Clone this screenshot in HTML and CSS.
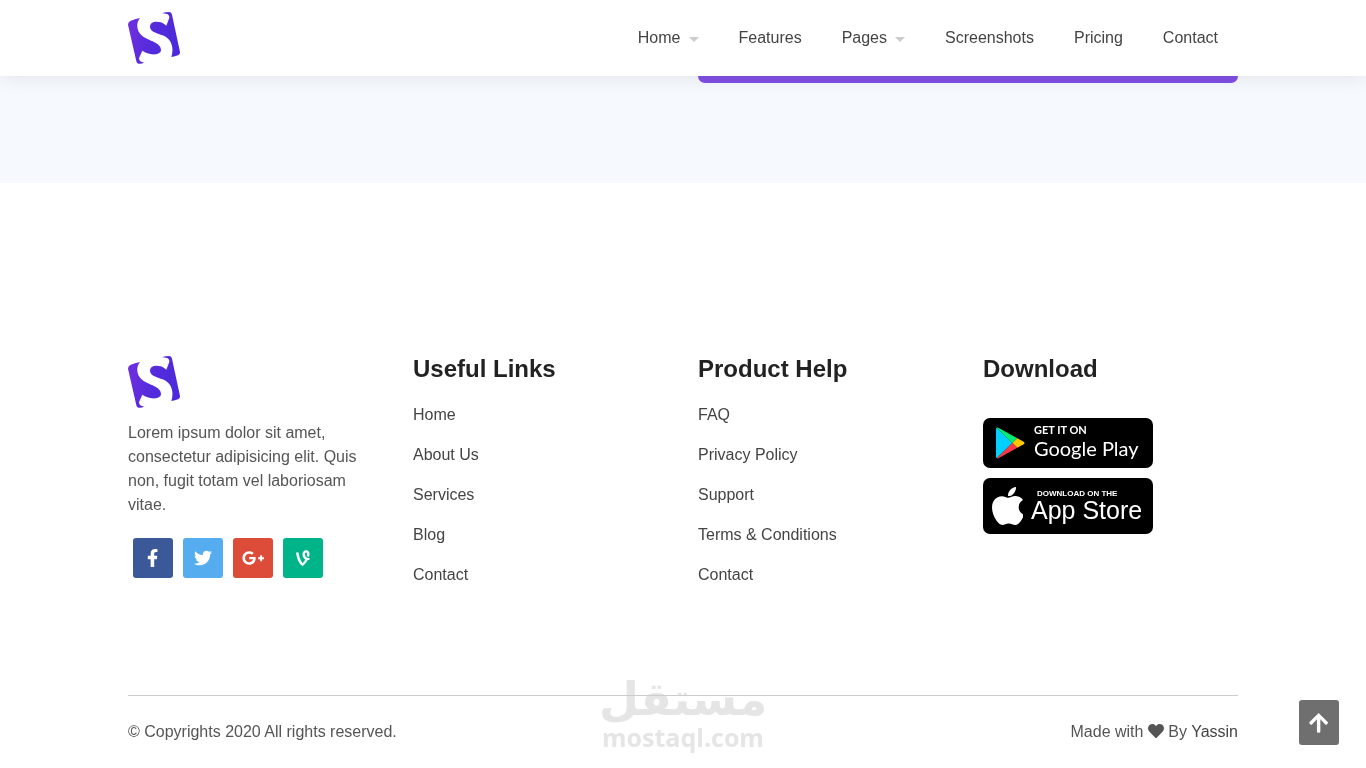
FILE: index.html
```html
<!DOCTYPE html>
<html lang="en">
<head>
<meta charset="utf-8">
<meta name="viewport" content="width=device-width, initial-scale=1">
<title>App landing page</title>
<link rel="stylesheet" href="styles.css">
</head>
<body>
<svg class="defs" aria-hidden="true">
  <defs>
    <linearGradient id="logo-fill" x1="0" y1="0" x2="1" y2="0.3">
      <stop offset="0" stop-color="#722fe0"/>
      <stop offset="0.6" stop-color="#542bdc"/>
      <stop offset="1" stop-color="#4c2adb"/>
    </linearGradient>
    <symbol id="logo" viewBox="0 0 156 156">
      <path fill="url(#logo-fill)" d="M0 38Q0 30 7 27Q20 21 36 18C24 32 24 58 43 72C63 88 98 90 99 114C99 128 75 130 58 124Q48 120 43 116L33 139C33 147 41 152 50 151Q40 157 31 155Q26 154 25 148Z M101 4Q112 0 124 0Q131 1 132 8L156 120Q157 127 150 130Q142 134 130 135C138 110 132 86 113 74C95 64 66 62 66 44C66 29 84 27 99 31Q108 35 115 41L124 17C125 7 114 4 101 4Z"/>
    </symbol>
  </defs>
</svg>

<header class="site-header">
  <div class="container header-row">
    <a class="brand" href="#" aria-label="Homepage"><svg class="logo"><use href="#logo"/></svg></a>
    <nav class="main-nav" aria-label="Main">
      <a class="has-menu" href="#">Home</a>
      <a href="#">Features</a>
      <a class="has-menu" href="#">Pages</a>
      <a href="#">Screenshots</a>
      <a href="#">Pricing</a>
      <a href="#">Contact</a>
    </nav>
  </div>
</header>

<main class="contact-section">
  <div class="container contact-grid">
    <div class="submit-edge"></div>
  </div>
</main>

<footer class="site-footer">
  <div class="container">
    <div class="footer-grid">
      <section class="about">
        <a class="brand" href="#" aria-label="Homepage"><svg class="logo"><use href="#logo"/></svg></a>
        <p class="about-text">Lorem ipsum dolor sit amet, consectetur adipisicing elit. Quis non, fugit totam vel laboriosam vitae.</p>
        <div class="social">
          <a class="facebook" href="#" aria-label="Facebook"><svg viewBox="0 0 320 512"><path d="M279.14 288l14.22-92.66h-88.91v-60.13c0-25.35 12.42-50.06 52.24-50.06h40.42V6.26S260.43 0 225.36 0c-73.22 0-121.08 44.38-121.08 124.72v70.62H22.89V288h81.39v224h100.17V288z"/></svg></a>
          <a class="twitter" href="#" aria-label="Twitter"><svg viewBox="0 0 512 512"><path d="M459.37 151.716c.325 4.548.325 9.097.325 13.645 0 138.72-105.583 298.558-298.558 298.558-59.452 0-114.68-17.219-161.137-47.106 8.447.974 16.568 1.299 25.34 1.299 49.055 0 94.213-16.568 130.274-44.832-46.132-.975-84.792-31.188-98.112-72.772 6.498.974 12.995 1.624 19.818 1.624 9.421 0 18.843-1.3 27.614-3.573-48.081-9.747-84.143-51.98-84.143-102.985v-1.299c13.969 7.797 30.214 12.67 47.431 13.319-28.264-18.843-46.781-51.005-46.781-87.391 0-19.492 5.197-37.36 14.294-52.954 51.655 63.675 129.3 105.258 216.365 109.807-1.624-7.797-2.599-15.918-2.599-24.04 0-57.828 46.782-104.934 104.934-104.934 30.213 0 57.502 12.67 76.67 33.137 23.715-4.548 46.456-13.32 66.599-25.34-7.798 24.366-24.366 44.833-46.132 57.827 21.117-2.273 41.584-8.122 60.426-16.243-14.292 20.791-32.161 39.308-52.628 54.253z"/></svg></a>
          <a class="google" href="#" aria-label="Google Plus"><svg viewBox="0 0 640 512"><path d="M386.061 228.496c1.834 9.692 3.143 19.384 3.143 31.956C389.204 370.205 315.599 448 204.8 448c-106.084 0-192-85.915-192-192s85.916-192 192-192c51.864 0 95.083 18.859 128.611 50.292l-52.126 50.03c-14.145-13.621-39.028-29.599-76.485-29.599-65.484 0-118.92 54.221-118.92 121.277 0 67.056 53.436 121.277 118.92 121.277 75.961 0 104.513-54.745 108.965-82.773H204.8v-66.009h181.261zm185.406 6.437V179.2h-56.001v55.733h-55.733v56.001h55.733v55.733h56.001v-55.733H627.2v-56.001h-55.733z"/></svg></a>
          <a class="vine" href="#" aria-label="Vine"><svg viewBox="0 0 384 512"><path d="M384 254.7v52.1c-18.4 4.2-36.9 6.1-52.1 6.1-36.9 77.4-103 143.8-125.1 156.2-14 7.9-27.1 8.4-42.7-.8C137 452 34.2 367.7 0 102.7h74.5C93.2 261.8 139 343.4 189.3 404.5c27.9-27.9 54.8-65.1 75.6-106.9-49.8-25.3-80.1-80.9-80.1-145.6 0-65.6 37.7-115.1 102.2-115.1 114.9 0 106.2 127.9 81.6 181.5 0 0-46.4 9.2-63.5-20.5 3.4-11.3 8.2-30.8 8.2-48.5 0-31.3-11.3-46.6-28.4-46.6-18.2 0-30.8 17.1-30.8 50 .1 79.2 59.4 118.7 129.9 101.2z"/></svg></a>
        </div>
      </section>

      <section>
        <h2 class="footer-title">Useful Links</h2>
        <ul class="footer-links">
          <li><a href="#">Home</a></li>
          <li><a href="#">About Us</a></li>
          <li><a href="#">Services</a></li>
          <li><a href="#">Blog</a></li>
          <li><a href="#">Contact</a></li>
        </ul>
      </section>

      <section>
        <h2 class="footer-title">Product Help</h2>
        <ul class="footer-links">
          <li><a href="#">FAQ</a></li>
          <li><a href="#">Privacy Policy</a></li>
          <li><a href="#">Support</a></li>
          <li><a href="#">Terms &amp; Conditions</a></li>
          <li><a href="#">Contact</a></li>
        </ul>
      </section>

      <section>
        <h2 class="footer-title">Download</h2>
        <div class="stores">
          <a class="store google-play" href="#">
            <svg class="play-mark" viewBox="0 0 90 98">
              <path fill="#00d0ff" d="M2 2Q0 4 0 8V90Q0 94 2 96L51 49Z"/>
              <path fill="#00ee76" d="M2 2Q5 0 10 3L66 34L51 49Z"/>
              <path fill="#ffc800" d="M66 34L86 45Q91 49 86 53L66 64L51 49Z"/>
              <path fill="#ff3a44" d="M2 96Q5 98 10 95L66 64L51 49Z"/>
            </svg>
            <span class="store-text"><span class="store-note">GET IT ON</span><span class="store-name">Google Play</span></span>
          </a>
          <a class="store app-store" href="#">
            <svg class="apple-mark" viewBox="4 32 365 448"><path d="M318.7 268.7c-.2-36.7 16.4-64.4 50-84.8-18.8-26.9-47.2-41.7-84.7-44.6-35.5-2.8-74.3 20.7-88.5 20.7-15 0-49.4-19.7-76.4-19.7C63.3 141.2 4 184.8 4 273.5q0 39.3 14.4 81.2c12.8 36.7 59 126.7 107.2 125.2 25.2-.6 43-17.9 75.8-17.9 31.8 0 48.3 17.9 76.4 17.9 48.6-.7 90.4-82.5 102.6-119.3-65.2-30.7-61.7-90-61.7-91.9zm-56.6-164.2c27.3-32.4 24.8-61.9 24-72.5-24.1 1.4-52 16.4-67.9 34.9-17.5 19.8-27.8 44.3-25.6 71.9 26.1 2 49.9-11.4 69.5-34.3z"/></svg>
            <span class="store-text"><span class="store-note">DOWNLOAD ON THE</span><span class="store-name">App Store</span></span>
          </a>
        </div>
      </section>
    </div>

    <div class="footer-bottom">
      <p>© Copyrights 2020 All rights reserved.</p>
      <p>Made with <svg class="heart" viewBox="0 0 512 512" role="img" aria-label="love"><path d="M462.3 62.6C407.5 15.9 326 24.3 275.7 76.2L256 96.5l-19.7-20.3C186.1 24.3 104.5 15.9 49.7 62.6c-62.8 53.6-66.1 149.8-9.9 207.9l193.5 199.8c12.5 12.9 32.8 12.9 45.3 0l193.5-199.8c56.3-58.1 53-154.3-9.8-207.9z"/></svg> By <a href="#">Yassin</a></p>
    </div>
  </div>
</footer>

<div class="watermark">
  <span class="watermark-ar" lang="ar" dir="rtl">مستقل</span>
  <span class="watermark-url">mostaql.com</span>
</div>

<button class="to-top" type="button" aria-label="Back to top"><svg viewBox="0 0 448 512"><path d="M34.9 289.5l-22.2-22.2c-9.4-9.4-9.4-24.6 0-33.9L207 39c9.4-9.4 24.6-9.4 33.9 0l194.3 194.3c9.4 9.4 9.4 24.6 0 33.9L413 289.4c-9.5 9.5-25 9.3-34.3-.4L264 168.6V456c0 13.3-10.7 24-24 24h-32c-13.3 0-24-10.7-24-24V168.6L69.2 289.1c-9.3 9.8-24.8 10-34.3.4z"/></svg></button>
</body>
</html>
```

FILE: styles.css
```css
*,
*::before,
*::after {
  box-sizing: border-box;
}

body {
  margin: 0;
  background: #fff;
  color: #555;
  font: 16px/24px "Liberation Sans", Arial, sans-serif;
}

a {
  color: #444;
  text-decoration: none;
}

p,
ul,
h2 {
  margin: 0;
  padding: 0;
}

.defs {
  position: absolute;
  width: 0;
  height: 0;
}

.container {
  max-width: 1140px;
  margin: 0 auto;
  padding: 0 15px;
}

.logo {
  display: block;
  width: 52px;
  height: 52px;
}

/* Header */
.site-header {
  position: sticky;
  top: 0;
  z-index: 10;
  background: #fff;
  box-shadow: 0 0 20px rgba(0, 0, 0, 0.1);
}

.header-row {
  display: flex;
  align-items: center;
  justify-content: space-between;
  padding-top: 12px;
  padding-bottom: 12px;
}

.brand {
  display: block;
  width: 52px;
}

.main-nav {
  display: flex;
}

.main-nav a {
  display: flex;
  align-items: center;
  padding: 0 20px;
}

.main-nav .has-menu::after {
  content: "";
  margin: 3px 0 0 8px;
  border: 5px solid transparent;
  border-top-color: #ccc;
  border-bottom: 0;
}

/* Contact section */
.contact-section {
  padding-bottom: 100px;
  background: #f6faff;
}

.contact-grid {
  display: grid;
  grid-template-columns: 1fr 1fr;
  column-gap: 30px;
}

.submit-edge {
  grid-column: 2;
  height: 7px;
  border-radius: 0 0 7px 7px;
  background: #8050e4;
}

/* Footer */
.site-footer {
  padding: 173px 0 24px;
}

.footer-grid {
  display: grid;
  grid-template-columns: repeat(4, 1fr);
  column-gap: 30px;
  padding-bottom: 108px;
}

.about-text {
  margin-top: 13px;
}

.social {
  display: flex;
  gap: 10px;
  margin: 21px 5px 0;
}

.social a {
  display: grid;
  place-items: center;
  width: 40px;
  height: 40px;
  border-radius: 3px;
}

.social svg {
  height: 18px;
  fill: #fff;
}

.facebook {
  background: #3b5998;
}

.twitter {
  background: #55acee;
}

.google {
  background: #dd4b39;
}

.vine {
  background: #00b489;
}

.footer-title {
  color: #222;
  font-size: 24px;
  line-height: 26px;
}

.footer-links {
  display: grid;
  gap: 16px;
  margin-top: 21px;
  list-style: none;
}

.stores {
  display: grid;
  gap: 10px;
  width: 170px;
  margin-top: 36px;
}

.store {
  display: flex;
  align-items: center;
  border-radius: 7px;
  background: #000;
  color: #fff;
  white-space: nowrap;
}

.store-text,
.store-note,
.store-name {
  display: block;
}

.google-play {
  gap: 9px;
  height: 50px;
  padding: 0 0 4px 13px;
  font-family: Lato, sans-serif;
}

.play-mark {
  width: 29px;
  height: 32px;
  margin-top: 4px;
}

.google-play .store-note {
  font-size: 11px;
  font-weight: 700;
  line-height: 14px;
}

.google-play .store-name {
  font-size: 20px;
  font-weight: 400;
  line-height: 22px;
}

.app-store {
  gap: 8px;
  height: 56px;
  padding-left: 9px;
}

.apple-mark {
  width: 31px;
  height: 38px;
  fill: #fff;
}

.app-store .store-note {
  padding-left: 6px;
  font-size: 8px;
  font-weight: 700;
  line-height: 8px;
}

.app-store .store-name {
  font-size: 25px;
  line-height: 24px;
}

.footer-bottom {
  display: flex;
  justify-content: space-between;
  padding-top: 24px;
  border-top: 1px solid #ccc;
}

.heart {
  width: 16px;
  height: 16px;
  fill: #555;
  vertical-align: -2px;
}

/* Overlays */
.watermark {
  position: fixed;
  bottom: 18px;
  left: 50%;
  z-index: -1;
  display: grid;
  justify-items: center;
  color: #e5e5e5;
  font-weight: 700;
  pointer-events: none;
  transform: translateX(-50%);
}

.watermark-ar {
  font-family: "DejaVu Sans", sans-serif;
  font-size: 46px;
  line-height: 50px;
}

.watermark-url {
  font-family: "Open Sans", sans-serif;
  font-size: 25px;
  line-height: 26px;
}

.to-top {
  position: fixed;
  right: 27px;
  bottom: 23px;
  display: grid;
  place-items: center;
  width: 40px;
  height: 45px;
  padding: 0;
  border: 0;
  border-radius: 3px;
  background: #6f6f6f;
  cursor: pointer;
}

.to-top svg {
  height: 22px;
  fill: #fff;
}
```
